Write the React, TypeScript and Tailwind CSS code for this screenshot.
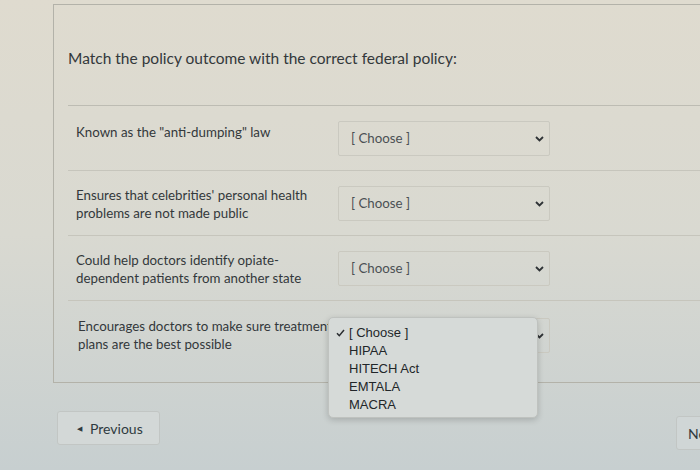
const rows = [
  { lines: ['Known as the "anti-dumping" law'], top: 'pt-[17px]' },
  { lines: ["Ensures that celebrities' personal health", 'problems are not made public'], top: 'pt-[15px]' },
  { lines: ['Could help doctors identify opiate-', 'dependent patients from another state'], top: 'pt-[15px]' },
]

const options = ['[ Choose ]', 'HIPAA', 'HITECH Act', 'EMTALA', 'MACRA']

function Chevron() {
  return (
    <svg width="9" height="6" viewBox="0 0 9 6" className="shrink-0">
      <path d="M1 1l3.5 3.5L8 1" fill="none" stroke="#2f3336" strokeWidth="1.8" />
    </svg>
  )
}

function ChooseSelect({ hideLabel }: { hideLabel?: boolean }) {
  return (
    <div className="mt-[15px] flex h-[35px] w-[212px] shrink-0 items-center justify-between rounded-[2px] border border-[#cac9c0] pl-[12px] pr-[5px]">
      <span className="text-[13.3px] text-[#4b5054]">{hideLabel ? '' : '[ Choose ]'}</span>
      <Chevron />
    </div>
  )
}

export default function App() {
  return (
    <div className="relative h-[470px] w-[700px] overflow-hidden bg-linear-to-b from-[#dfdbcf] via-[#d9d9d1] to-[#c7cfd0] font-['Lato','Noto_Sans',sans-serif] text-[#33383b]">
      <div className="ml-[53px] mt-[4px] h-[379px] border-b border-l border-t border-[#b3b2a9]">
        <div className="ml-[14px] h-[101px] border-b border-[#bdbcb3] pt-[42px]">
          <h1 className="text-[15.5px] leading-[22px]">Match the policy outcome with the correct federal policy:</h1>
        </div>
        <div className="ml-[14px]">
          {rows.map((row, i) => (
            <div key={i} className="flex h-[65px] border-b border-[#c6c5bc] pl-[8px]">
              <div className={`w-[262px] shrink-0 text-[13.3px] leading-[18px] ${row.top}`}>
                {row.lines.map((l) => (
                  <div key={l} className="whitespace-nowrap">{l}</div>
                ))}
              </div>
              <ChooseSelect />
            </div>
          ))}
          <div className="flex h-[81px] pl-[10px]">
            <div className="w-[260px] shrink-0 pt-[16px] text-[13.3px] leading-[18px]">
              <div className="whitespace-nowrap">Encourages doctors to make sure treatment</div>
              <div className="whitespace-nowrap">plans are the best possible</div>
            </div>
            <div className="mt-[2px]">
              <ChooseSelect hideLabel />
            </div>
          </div>
        </div>
      </div>

      <div className="flex items-start">
        <button className="ml-[57px] mt-[28px] flex h-[34px] w-[103px] shrink-0 items-center gap-[8px] rounded-[3px] border border-[#c2c6c4] bg-[#d3d8d7] pl-[19px] text-[14px] text-[#2f3a40]">
          <span className="text-[7px]">◀</span>
          Previous
        </button>
        <button className="ml-[516px] mt-[33px] flex h-[34px] w-[70px] shrink-0 items-center rounded-[3px] border border-[#c2c6c4] bg-[#d0d6d6] pl-[11px] text-[14px] text-[#2f3a40]">
          Next
        </button>
      </div>

      <div className="absolute left-[328px] top-[317px] h-[101px] w-[210px] rounded-[5px] border border-[#bfc2bf] bg-[#d6dad8] pt-[6px] font-['Liberation_Sans',Arial,sans-serif] text-[13px] leading-[18px] text-[#222629] shadow-[0_2px_6px_rgba(0,0,0,0.18)]">
        {options.map((o, i) => (
          <div key={o} className="flex items-center">
            <span className="flex w-[20px] justify-end pr-[4px]">
              {i === 0 && (
                <svg width="9" height="8" viewBox="0 0 9 8">
                  <path d="M1 4.2l2.3 2.5L8 1" fill="none" stroke="#2a2d30" strokeWidth="1.5" />
                </svg>
              )}
            </span>
            <span>{o}</span>
          </div>
        ))}
      </div>
    </div>
  )
}
